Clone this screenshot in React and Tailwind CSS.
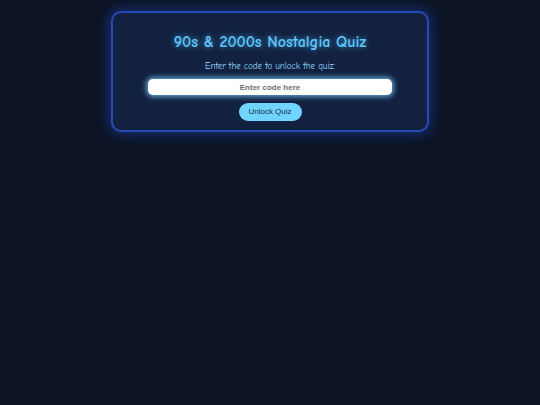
export default function App() {
  return (
    <div className="min-h-[405px] bg-[#0c1424] pt-[11px] font-['Comic_Sans_MS','Comic_Neue',cursive]">
      <div className="mx-auto flex w-[318px] flex-col items-center rounded-[10px] border-2 border-[#2849b8] bg-[#12213f] px-[36px] pt-[19px] pb-[9px] shadow-[0_0_12px_3px_rgba(37,80,220,0.4)]">
        <h1 className="text-[16px] leading-[20px] font-bold text-[#5cc8ff] [text-shadow:0_0_6px_rgba(92,200,255,0.7)]">
          90s &amp; 2000s Nostalgia Quiz
        </h1>
        <p className="mt-[8px] text-[9px] leading-[12px] text-[#93dbff]">
          Enter the code to unlock the quiz:
        </p>
        <input
          className="mt-[7px] h-[16px] w-[244px] rounded-[5px] bg-white text-center font-['Liberation_Sans',Arial,sans-serif] text-[8px] font-bold text-[#555] shadow-[0_0_5px_2px_rgba(120,200,255,0.75)] outline-none placeholder:text-[#707070]"
          placeholder="Enter code here"
          type="text"
        />
        <button
          className="mt-[8px] h-[18px] w-[63px] rounded-full bg-[#6fd4ff] font-['Liberation_Sans',Arial,sans-serif] text-[8px] text-[#1a2b4c]"
          type="button"
        >
          Unlock Quiz
        </button>
      </div>
    </div>
  );
}
